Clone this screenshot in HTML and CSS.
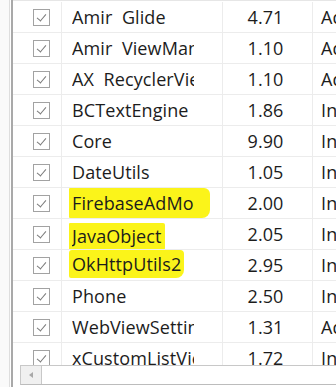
FILE: index.html
```html
<!DOCTYPE html>
<html lang="en">
<head>
  <meta charset="UTF-8">
  <title>Modules</title>
  <link rel="stylesheet" href="styles.css">
</head>
<body>

  <div class="frame">
    <div class="gutter"></div>

    <div class="list">
      <div class="rows">
        <div class="row"><span class="cell check"><span class="box"></span></span><span class="cell name"><span class="label">Amir&nbsp; Glide</span></span><span class="cell ver">4.71</span><span class="cell kind">Additional</span></div>
        <div class="row"><span class="cell check"><span class="box"></span></span><span class="cell name"><span class="label">Amir&nbsp; ViewManager</span></span><span class="cell ver">1.10</span><span class="cell kind">Additional</span></div>
        <div class="row"><span class="cell check"><span class="box"></span></span><span class="cell name"><span class="label">AX&nbsp; RecyclerView</span></span><span class="cell ver">1.10</span><span class="cell kind">Additional</span></div>
        <div class="row"><span class="cell check"><span class="box"></span></span><span class="cell name"><span class="label">BCTextEngine</span></span><span class="cell ver">1.86</span><span class="cell kind">Internal</span></div>
        <div class="row"><span class="cell check"><span class="box"></span></span><span class="cell name"><span class="label">Core</span></span><span class="cell ver">9.90</span><span class="cell kind">Internal</span></div>
        <div class="row"><span class="cell check"><span class="box"></span></span><span class="cell name"><span class="label">DateUtils</span></span><span class="cell ver">1.05</span><span class="cell kind">Internal</span></div>
        <div class="row"><span class="cell check"><span class="box"></span></span><span class="cell name"><span class="hl hl-a"><span class="label">FirebaseAdMob</span></span></span><span class="cell ver">2.00</span><span class="cell kind">Internal</span></div>
        <div class="row"><span class="cell check"><span class="box"></span></span><span class="cell name"><span class="hl hl-b"><span class="label">JavaObject</span></span></span><span class="cell ver">2.05</span><span class="cell kind">Internal</span></div>
        <div class="row"><span class="cell check"><span class="box"></span></span><span class="cell name"><span class="hl hl-c"><span class="label">OkHttpUtils2</span></span></span><span class="cell ver">2.95</span><span class="cell kind">Internal</span></div>
        <div class="row"><span class="cell check"><span class="box"></span></span><span class="cell name"><span class="label">Phone</span></span><span class="cell ver">2.50</span><span class="cell kind">Internal</span></div>
        <div class="row"><span class="cell check"><span class="box"></span></span><span class="cell name"><span class="label">WebViewSettings</span></span><span class="cell ver">1.31</span><span class="cell kind">Additional</span></div>
        <div class="row"><span class="cell check"><span class="box"></span></span><span class="cell name"><span class="label">xCustomListView</span></span><span class="cell ver">1.72</span><span class="cell kind">Internal</span></div>
      </div>

      <div class="hscroll">
        <span class="arrow"></span>
        <span class="thumb"></span>
      </div>
    </div>
  </div>

</body>
</html>
```

FILE: styles.css
```css
body {
  margin: 0;
  font-family: 'Open Sans', 'Noto Sans', sans-serif;
  background-color: #ffffff;
  color: #1c1c1c;
  overflow: hidden;
}

.frame {
  display: flex;
  height: 387px;
}

/* strip left of the list, with the control border */
.gutter {
  width: 9px;
  background-color: #fafafa;
  border-right: 1px solid #dedede;
  margin-right: 1px;
}

.list {
  flex: 1;
  display: flex;
  flex-direction: column;
  border-left: 2px solid #a9a9a9;
  min-width: 0;
}

.rows {
  height: 363px;
  overflow: hidden;
  border-top: 1px solid #e6e6e6;
  padding-top: 1px;
}

.row {
  display: grid;
  grid-template-columns: 49px 161px 90px 1fr;
  height: 30px;
  border-bottom: 1px solid #ececec;
  font-size: 18px;
  letter-spacing: 0.1px;
}

.cell {
  display: flex;
  align-items: center;
  overflow: hidden;
  white-space: nowrap;
  border-right: 1px solid #ececec;
}

.check {
  padding-left: 20px;
}

.box {
  width: 15px;
  height: 15px;
  border: 1px solid #a2a2a2;
  background-color: #ffffff;
  position: relative;
}

/* tick drawn from two borders */
.box::after {
  content: '';
  position: absolute;
  left: 5px;
  top: 2px;
  width: 4px;
  height: 8px;
  border-right: 1.5px solid #7a7a7a;
  border-bottom: 1.5px solid #7a7a7a;
  transform: rotate(40deg);
}

.name {
  padding-left: 10px;
}

.label {
  display: inline-block;
  max-width: 122px;
  overflow: hidden;
  white-space: nowrap;
}

/* marker strokes over three names */
.hl {
  display: inline-flex;
  align-items: center;
  background-color: #fbf41a;
  margin-left: -3px;
  padding-left: 3px;
}

.hl-a {
  height: 30px;
  padding-right: 16px;
  border-radius: 1px 6px 8px 1px;
}

.hl-b {
  height: 27px;
  margin-top: 4px;
  padding-right: 3px;
  border-radius: 1px 2px 2px 1px;
}

.hl-c {
  height: 28px;
  margin-top: -2px;
  padding-right: 3px;
  border-radius: 3px 4px 8px 2px;
}

.ver {
  justify-content: center;
  padding-right: 4px;
}

.kind {
  padding-left: 8px;
  border-right: none;
}

/* horizontal scroll bar */
.hscroll {
  display: flex;
  height: 18px;
  margin-left: 7px;
  border-top: 1px solid #c8c8c8;
  border-bottom: 1px solid #bcbcbc;
  border-left: 1px solid #c8c8c8;
  background-color: #f0f0f0;
}

.arrow {
  width: 20px;
  border-right: 1px solid #c8c8c8;
  display: flex;
  align-items: center;
  justify-content: center;
}

.arrow::before {
  content: '';
  border-top: 3px solid transparent;
  border-bottom: 3px solid transparent;
  border-right: 4px solid #a8a8a8;
}

.thumb {
  flex: 1;
  background-color: #ffffff;
}
```
